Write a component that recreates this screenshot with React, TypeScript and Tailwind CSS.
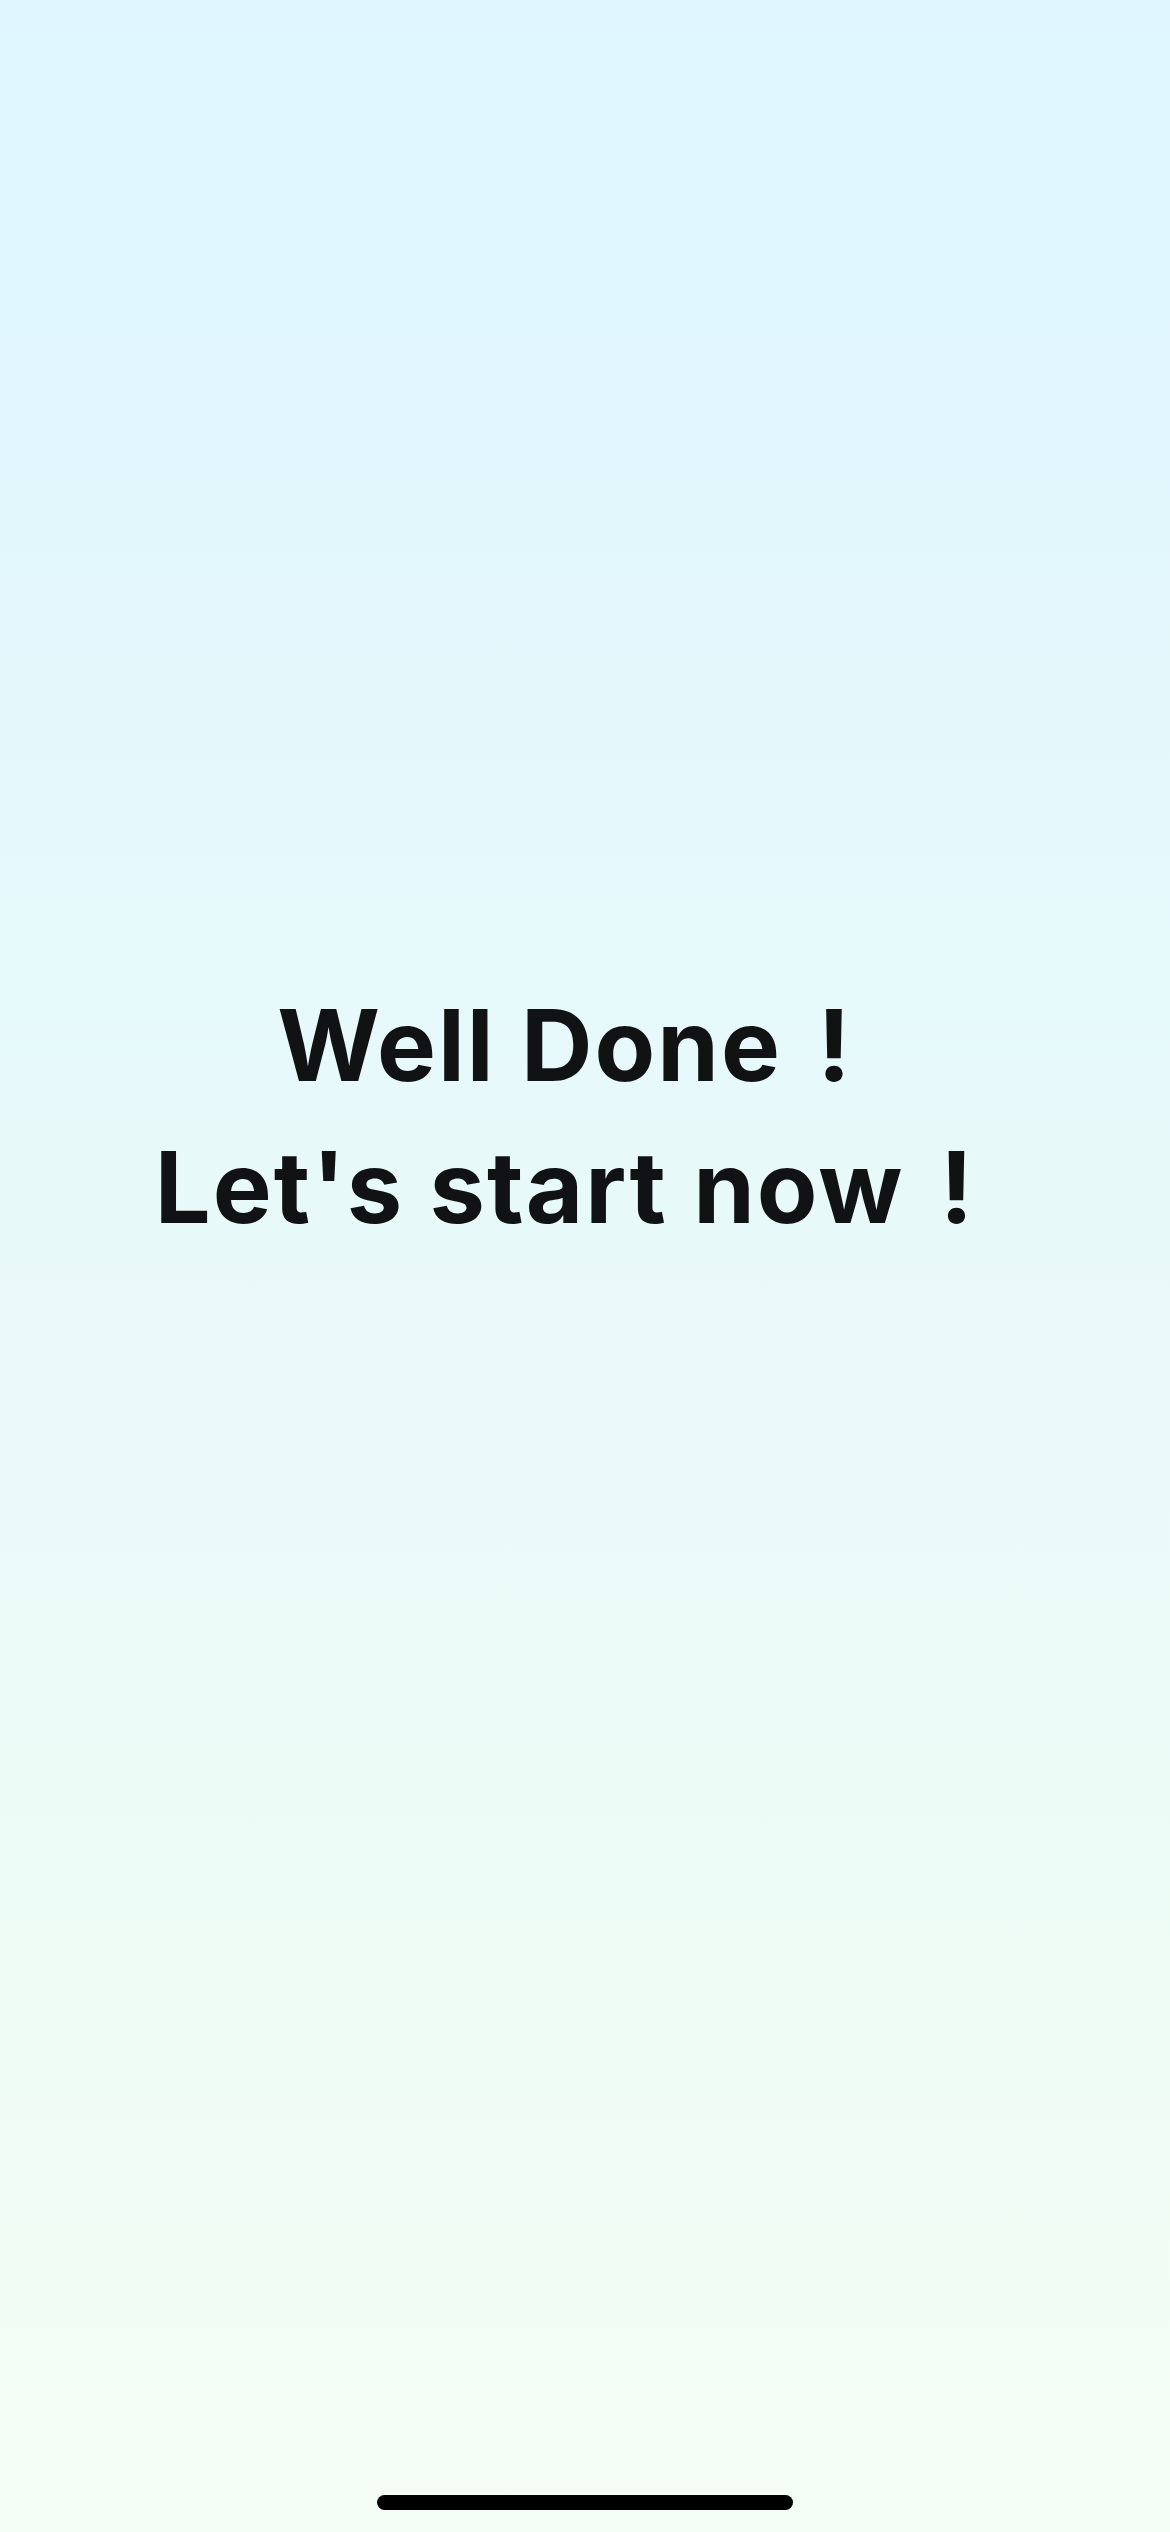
export default function App() {
  return (
    <div className="relative flex h-[2532px] w-[1170px] flex-col bg-gradient-to-b from-[#def6ff] to-[#f3fdf3] font-['Inter',sans-serif]">
      {/* message */}
      <div className="flex flex-1 flex-col items-center justify-center pr-[40px] pb-[220px]">
        <h1 className="text-center text-[99px] font-bold leading-[142px] tracking-[2px] text-[#111214]">
          Well Done <span className="ml-[10px]">!</span>
          <br />
          Let's start now <span className="ml-[10px]">!</span>
        </h1>
      </div>

      {/* home indicator */}
      <div className="flex h-[80px] items-start justify-center pt-[43px]">
        <div className="h-[15px] w-[416px] rounded-full bg-black" />
      </div>
    </div>
  );
}
